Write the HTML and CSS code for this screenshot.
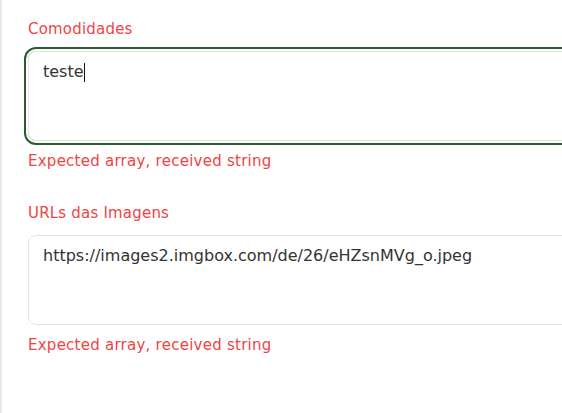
FILE: index.html
```html
<!DOCTYPE html>
<html lang="pt">
<head>
<meta charset="utf-8">
<link rel="stylesheet" href="styles.css">
</head>
<body>
<div class="panel">
  <div class="field">
    <label class="label">Comodidades</label>
    <div class="input input--focus"><span>teste</span><span class="caret"></span></div>
    <p class="error">Expected array, received string</p>
  </div>
  <div class="field">
    <label class="label">URLs das Imagens</label>
    <div class="input"><span>https://images2.imgbox.com/de/26/eHZsnMVg_o.jpeg</span></div>
    <p class="error">Expected array, received string</p>
  </div>
</div>
</body>
</html>
```
FILE: styles.css
```css
html, body {
  margin: 0;
  padding: 0;
  background: #fff;
  overflow: hidden;
}
body {
  font-family: "DejaVu Sans", "Liberation Sans", sans-serif;
}
.panel {
  border-left: 2px solid #e8e8e8;
  padding: 19px 0 0 26px;
  min-height: 413px;
  box-sizing: border-box;
}
.field {
  margin-bottom: 32px;
}
.label {
  display: block;
  font-size: 15px;
  line-height: 20px;
  letter-spacing: 0.2px;
  color: #ef4444;
}
.input {
  margin-top: 12px;
  width: 620px;
  height: 90px;
  box-sizing: border-box;
  border: 1px solid #e5e5e5;
  border-radius: 8px;
  padding: 8px 14px;
  font-size: 16px;
  line-height: 24px;
  color: #333;
  display: flex;
  align-items: flex-start;
}
.input--focus {
  box-shadow: 0 0 0 2px #fff, 0 0 0 4px #2f5a2f;
}
.caret {
  display: inline-block;
  width: 1px;
  height: 19px;
  margin-top: 3px;
  background: #111;
}
.error {
  margin: 10px 0 0;
  font-size: 15px;
  line-height: 20px;
  letter-spacing: 0.25px;
  color: #ef4444;
}
```
